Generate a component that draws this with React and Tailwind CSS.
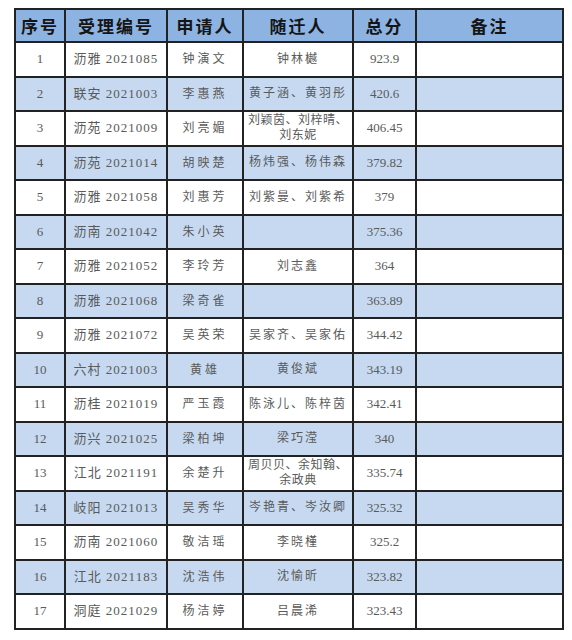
const rows = [
  ['1', '沥雅 2021085', '钟演文', ['钟林樾'], '923.9'],
  ['2', '联安 2021003', '李惠燕', ['黄子涵、黄羽彤'], '420.6'],
  ['3', '沥苑 2021009', '刘亮媚', ['刘颖茵、刘梓晴、', '刘东妮'], '406.45'],
  ['4', '沥苑 2021014', '胡映楚', ['杨炜强、杨伟森'], '379.82'],
  ['5', '沥雅 2021058', '刘惠芳', ['刘紫曼、刘紫希'], '379'],
  ['6', '沥南 2021042', '朱小英', [], '375.36'],
  ['7', '沥雅 2021052', '李玲芳', ['刘志鑫'], '364'],
  ['8', '沥雅 2021068', '梁奇雀', [], '363.89'],
  ['9', '沥雅 2021072', '吴英荣', ['吴家齐、吴家佑'], '344.42'],
  ['10', '六村 2021003', '黄雄', ['黄俊斌'], '343.19'],
  ['11', '沥桂 2021019', '严玉霞', ['陈泳儿、陈梓茵'], '342.41'],
  ['12', '沥兴 2021025', '梁柏坤', ['梁巧滢'], '340'],
  ['13', '江北 2021191', '余楚升', ['周贝贝、余知翰、', '余政典'], '335.74'],
  ['14', '岐阳 2021013', '吴秀华', ['岑艳青、岑汝卿'], '325.32'],
  ['15', '沥南 2021060', '敬洁瑶', ['李晓槿'], '325.2'],
  ['16', '江北 2021183', '沈浩伟', ['沈愉昕'], '323.82'],
  ['17', '洞庭 2021029', '杨洁婷', ['吕晨浠'], '323.43'],
];

const heads = ['序号', '受理编号', '申请人', '随迁人', '总分', '备注'];
const widths = ['w-[50px]', 'w-[102px]', 'w-[76px]', 'w-[110px]', 'w-[63px]', 'w-[147px]'];

export default function App() {
  return (
    <div className="w-[572px] h-[640px] bg-white pt-[8px] pl-[14px] overflow-hidden">
      <table
        className="table-fixed border-collapse w-[548px] text-[#5a5a5a]"
        style={{ fontFamily: '"Liberation Serif", "Noto Sans CJK SC", serif' }}
      >
        <colgroup>
          {widths.map((w, i) => (
            <col key={i} className={w} />
          ))}
        </colgroup>
        <thead>
          <tr className="h-[33px] bg-[#8db3e2]">
            {heads.map((h) => (
              <th
                key={h}
                className="border-2 border-[#222] text-[17px] leading-[20px] font-bold text-[#151515] tracking-[2px] p-0 text-center"
                style={{ fontFamily: '"Noto Sans CJK SC", sans-serif' }}
              >
                {h}
              </th>
            ))}
          </tr>
        </thead>
        <tbody>
          {rows.map((r, i) => (
            <tr key={r[0]} className={`h-[34.5px] ${i % 2 === 1 ? 'bg-[#c6d9f1]' : 'bg-white'}`}>
              <td className="border-2 border-[#222] text-center text-[13px] leading-[16px] p-0">{r[0]}</td>
              <td className="border-2 border-[#222] text-center text-[13px] leading-[16px] p-0 tracking-[1px]">{r[1]}</td>
              <td className="border-2 border-[#222] text-center text-[12px] leading-[16px] p-0 tracking-[3px]">{r[2]}</td>
              <td className="border-2 border-[#222] text-center text-[12px] leading-[15px] p-0 whitespace-nowrap">
                {r[3].map((line) => (
                  <div key={line} className={r[3].length > 1 ? 'tracking-[0.5px]' : 'tracking-[2px]'}>
                    {line}
                  </div>
                ))}
              </td>
              <td className="border-2 border-[#222] text-center text-[13px] leading-[16px] p-0">{r[4]}</td>
              <td className="border-2 border-[#222] p-0"></td>
            </tr>
          ))}
        </tbody>
      </table>
    </div>
  );
}
